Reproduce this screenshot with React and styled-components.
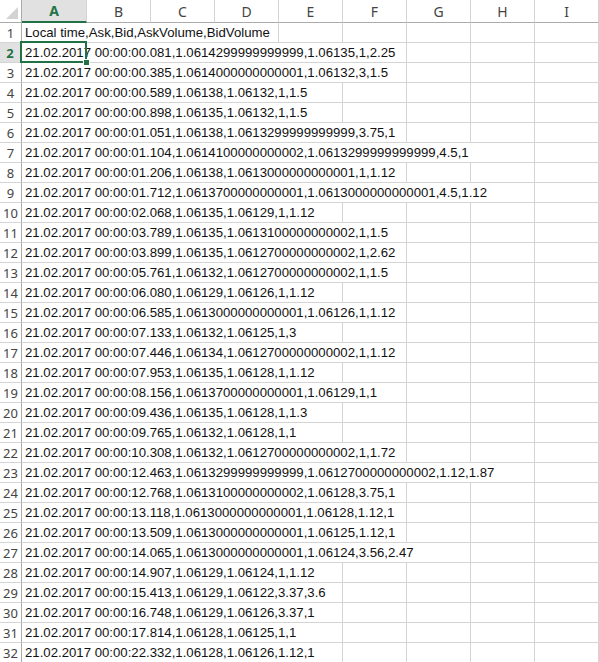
import React from 'react'
import styled, { createGlobalStyle, css } from 'styled-components'

const GlobalStyle = createGlobalStyle`
  html, body {
    margin: 0;
    padding: 0;
    background: #ffffff;
    overflow: hidden;
  }
`

const green = '#217346'
const gridLine = '#d4d4d4'
const headLine = '#ababab'
const columnsTemplate = '22px 65px repeat(8, 64px)'

const columns = ['A', 'B', 'C', 'D', 'E', 'F', 'G', 'H', 'I']

const rows = [
  'Local time,Ask,Bid,AskVolume,BidVolume',
  '21.02.2017 00:00:00.081,1.0614299999999999,1.06135,1,2.25',
  '21.02.2017 00:00:00.385,1.0614000000000001,1.06132,3,1.5',
  '21.02.2017 00:00:00.589,1.06138,1.06132,1,1.5',
  '21.02.2017 00:00:00.898,1.06135,1.06132,1,1.5',
  '21.02.2017 00:00:01.051,1.06138,1.0613299999999999,3.75,1',
  '21.02.2017 00:00:01.104,1.0614100000000002,1.0613299999999999,4.5,1',
  '21.02.2017 00:00:01.206,1.06138,1.0613000000000001,1,1.12',
  '21.02.2017 00:00:01.712,1.0613700000000001,1.0613000000000001,4.5,1.12',
  '21.02.2017 00:00:02.068,1.06135,1.06129,1,1.12',
  '21.02.2017 00:00:03.789,1.06135,1.0613100000000002,1,1.5',
  '21.02.2017 00:00:03.899,1.06135,1.0612700000000002,1,2.62',
  '21.02.2017 00:00:05.761,1.06132,1.0612700000000002,1,1.5',
  '21.02.2017 00:00:06.080,1.06129,1.06126,1,1.12',
  '21.02.2017 00:00:06.585,1.0613000000000001,1.06126,1,1.12',
  '21.02.2017 00:00:07.133,1.06132,1.06125,1,3',
  '21.02.2017 00:00:07.446,1.06134,1.0612700000000002,1,1.12',
  '21.02.2017 00:00:07.953,1.06135,1.06128,1,1.12',
  '21.02.2017 00:00:08.156,1.0613700000000001,1.06129,1,1',
  '21.02.2017 00:00:09.436,1.06135,1.06128,1,1.3',
  '21.02.2017 00:00:09.765,1.06132,1.06128,1,1',
  '21.02.2017 00:00:10.308,1.06132,1.0612700000000002,1,1.72',
  '21.02.2017 00:00:12.463,1.0613299999999999,1.0612700000000002,1.12,1.87',
  '21.02.2017 00:00:12.768,1.0613100000000002,1.06128,3.75,1',
  '21.02.2017 00:00:13.118,1.0613000000000001,1.06128,1.12,1',
  '21.02.2017 00:00:13.509,1.0613000000000001,1.06125,1.12,1',
  '21.02.2017 00:00:14.065,1.0613000000000001,1.06124,3.56,2.47',
  '21.02.2017 00:00:14.907,1.06129,1.06124,1,1.12',
  '21.02.2017 00:00:15.413,1.06129,1.06122,3.37,3.6',
  '21.02.2017 00:00:16.748,1.06129,1.06126,3.37,1',
  '21.02.2017 00:00:17.814,1.06128,1.06125,1,1',
  '21.02.2017 00:00:22.332,1.06128,1.06126,1.12,1',
]

const Sheet = styled.div`
  width: 599px;
  height: 662px;
  overflow: hidden;
  background: #ffffff;
`

const HeaderRow = styled.div`
  display: grid;
  grid-template-columns: ${columnsTemplate};
  height: 23px;
`

const Corner = styled.div`
  display: flex;
  align-items: flex-end;
  justify-content: flex-end;
  padding: 0 3px 3px 0;
  box-sizing: border-box;
  border-right: 1px solid ${headLine};
  border-bottom: 1px solid ${headLine};
`

const ColHead = styled.div`
  display: flex;
  align-items: center;
  justify-content: center;
  box-sizing: border-box;
  border-right: 1px solid ${gridLine};
  border-bottom: 1px solid ${headLine};
  font-family: "Noto Sans", "Open Sans", sans-serif;
  font-size: 14px;
  color: #444444;
  ${({ $active }) => $active && css`
    background: #e1e1e1;
    color: ${green};
    font-weight: bold;
    border-bottom: 2px solid ${green};
  `}
`

const Row = styled.div`
  display: grid;
  grid-template-columns: ${columnsTemplate};
  height: 20px;
`

const RowHead = styled.div`
  display: flex;
  align-items: center;
  justify-content: center;
  box-sizing: border-box;
  border-right: 1px solid ${headLine};
  border-bottom: 1px solid ${gridLine};
  font-family: "Noto Sans", "Open Sans", sans-serif;
  font-size: 13px;
  color: #444444;
  ${({ $active }) => $active && css`
    background: #e1e1e1;
    color: ${green};
    font-weight: bold;
    border-right: 2px solid ${green};
  `}
`

const Cell = styled.div`
  position: relative;
  display: flex;
  align-items: flex-start;
  min-width: 0;
  box-sizing: border-box;
  border-right: 1px solid ${gridLine};
  border-bottom: 1px solid ${gridLine};
`

// text that spills over the empty cells to its right hides their gridlines
const CellText = styled.span`
  position: relative;
  z-index: 1;
  flex-shrink: 0;
  height: 19px;
  padding: 0 2px 0 3px;
  background: #ffffff;
  white-space: nowrap;
  font-family: "Liberation Sans", Arial, sans-serif;
  font-size: 13.2px;
  line-height: 20px;
  color: #111111;
`

const Selection = styled.div`
  position: absolute;
  z-index: 2;
  top: -2px;
  left: -2px;
  right: -1px;
  bottom: -1px;
  border: 2px solid ${green};
  pointer-events: none;
`

const FillHandle = styled.div`
  position: absolute;
  right: -5px;
  bottom: -5px;
  width: 5px;
  height: 5px;
  background: ${green};
  border: 1px solid #ffffff;
`

const CornerMark = () => (
  <svg width="12" height="12" viewBox="0 0 12 12">
    <polygon points="12,0 12,12 0,12" fill="#d3d3d3" />
  </svg>
)

const App = () => (
  <Sheet>
    <GlobalStyle />
    <HeaderRow>
      <Corner>
        <CornerMark />
      </Corner>
      {columns.map((c) => (
        <ColHead key={c} $active={c === 'A'}>{c}</ColHead>
      ))}
    </HeaderRow>
    {rows.map((text, i) => {
      const active = i === 1
      return (
        <Row key={i}>
          <RowHead $active={active}>{i + 1}</RowHead>
          {columns.map((c) => (
            <Cell key={c}>
              {c === 'A' && <CellText>{text}</CellText>}
              {c === 'A' && active && (
                <Selection>
                  <FillHandle />
                </Selection>
              )}
            </Cell>
          ))}
        </Row>
      )
    })}
  </Sheet>
)

export default App
